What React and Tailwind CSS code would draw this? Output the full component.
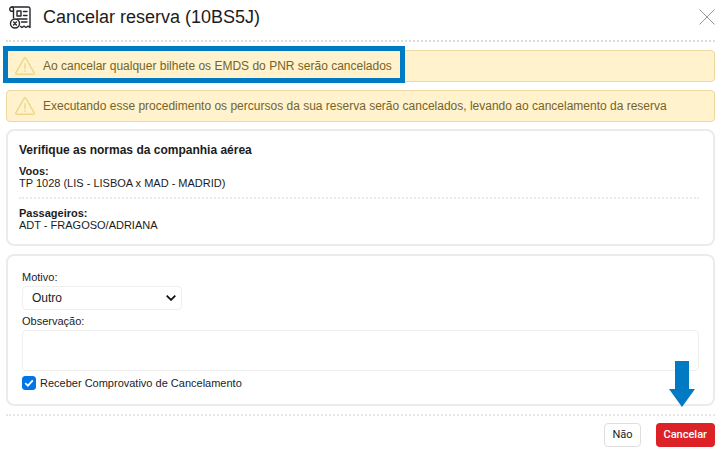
import { useState } from "react";

const alerts = [
  "Ao cancelar qualquer bilhete os EMDS do PNR serão cancelados",
  "Executando esse procedimento os percursos da sua reserva serão cancelados, levando ao cancelamento da reserva",
];

function ReceiptCancelIcon() {
  return (
    <svg viewBox="0 0 22 23" className="h-[23px] w-[22px] shrink-0" fill="none" stroke="#26262b" strokeWidth="1.4" strokeLinejoin="round" strokeLinecap="round" aria-hidden="true">
      <path d="M4.500 12V5.200H2.300C1.200 5.200.8 4.200.8 3.100S1.500 1 2.700 1H19.500C20.700 1 21 1.800 21 2.800V21.500L19 20.200L17 21.500L15 20.200L13 21.500L11.500 20.400" />
      <path d="M2.700 1C4 1 4.500 2 4.500 3.100V5.200" />
      <path d="M8 5H12V10H8ZM14.500 5.500H18M14.500 9.500H18M8 13H18M12.500 16H18" />
      <circle cx="6" cy="17.500" r="4.500" />
      <path d="M4.600 16.100L7.400 18.900M7.400 16.100L4.600 18.900" />
    </svg>
  );
}

function WarningIcon() {
  return (
    <svg viewBox="0 0 20 18" className="h-[18px] w-5 shrink-0" fill="none" stroke="#efd68c" strokeWidth="1.4" strokeLinejoin="round" strokeLinecap="round" aria-hidden="true">
      <path d="M9.300 1.200Q10 .4 10.700 1.200L19.200 15.900Q19.600 17.200 18.400 17.200H1.600Q.4 17.200.8 15.900Z" />
      <path d="M10 6.500V11.500M10 13.700V14.200" />
    </svg>
  );
}

function Alert({ children, highlighted }) {
  return (
    <div role="alert" className="relative flex min-h-8 items-center gap-2 rounded-sm border border-[#ecd9a0] bg-[#fff2cc] px-2 text-xs text-[#75642a]">
      <WarningIcon />
      <p>{children}</p>
      {highlighted && (
        <div className="pointer-events-none absolute -top-[5px] -left-1 h-[37px] w-[402px] border-[5px] border-[#007ac2]" />
      )}
    </div>
  );
}

export default function App() {
  const [reason, setReason] = useState("Outro");
  const [note, setNote] = useState("");
  const [receipt, setReceipt] = useState(true);

  return (
    <div className="bg-white pr-[5px] pl-[6px] font-['Liberation_Sans',Arial,sans-serif] text-[11px] leading-3 text-[#1c1c1c]">
      {/* Cabeçalho */}
      <header className="flex h-[42px] items-start justify-between border-b-2 border-dotted border-[#dcdcdc] pt-[5px]">
        <div className="flex items-center gap-3 pl-[3px]">
          <ReceiptCancelIcon />
          <h1 className="text-lg leading-6">Cancelar reserva (10BS5J)</h1>
        </div>
        <button type="button" aria-label="Fechar" className="pt-1">
          <svg viewBox="0 0 16 16" className="size-4" stroke="#999" strokeWidth="1" aria-hidden="true">
            <path d="M.5.5L15.500 15.500M15.500.5L.5 15.500" />
          </svg>
        </button>
      </header>

      <main>
        <div className="flex flex-col gap-2 pt-2 pb-[7px]">
          {alerts.map((text, i) => (
            <Alert key={text} highlighted={i === 0}>
              {text}
            </Alert>
          ))}
        </div>

        {/* Normas */}
        <section className="rounded-lg border-2 border-[#ebebeb] pt-[11px] pr-[14px] pb-[13px] pl-[11px]">
          <h2 className="text-xs leading-4 font-bold">Verifique as normas da companhia aérea</h2>
          <div className="border-b-2 border-dotted border-[#ebebeb] pt-[7px] pb-2">
            <h3 className="font-bold">Voos:</h3>
            <p>TP 1028 (LIS - LISBOA x MAD - MADRID)</p>
          </div>
          <div className="pt-2">
            <h3 className="font-bold">Passageiros:</h3>
            <p>ADT - FRAGOSO/ADRIANA</p>
          </div>
        </section>

        {/* Formulário */}
        <form id="cancel-form" onSubmit={(e) => e.preventDefault()} className="mt-2 rounded-lg border-2 border-[#ebebeb] px-[14px] pt-[15px] pb-[14px]">
          <label htmlFor="reason" className="block">Motivo:</label>
          <div className="relative mt-[3px] w-40">
            <select id="reason" value={reason} onChange={(e) => setReason(e.target.value)} className="h-6 w-full appearance-none rounded-sm border border-[#efefef] bg-white pl-[9px] text-xs leading-4">
              <option>Outro</option>
            </select>
            <svg viewBox="0 0 10 6" className="pointer-events-none absolute top-[9px] right-[6px] h-[6px] w-[10px]" fill="none" stroke="#111" strokeWidth="1.800" aria-hidden="true">
              <path d="M.7.7L5 4.900L9.300.7" />
            </svg>
          </div>
          <label htmlFor="note" className="mt-[5px] block">Observação:</label>
          <textarea id="note" value={note} onChange={(e) => setNote(e.target.value)} className="mt-[3px] block h-[41px] w-full resize-none rounded-sm border border-[#efefef] p-2" />
          <div className="mt-[5px] flex items-center gap-1">
            <div className="relative size-[14px]">
              <input id="receipt" type="checkbox" checked={receipt} onChange={(e) => setReceipt(e.target.checked)} className="peer block size-[14px] appearance-none rounded-[3px] border border-[#0075e8] checked:bg-[#0075e8]" />
              <svg viewBox="0 0 14 14" className="pointer-events-none absolute inset-0 hidden size-[14px] peer-checked:block" fill="none" stroke="white" strokeWidth="1.800" aria-hidden="true">
                <path d="M3.200 7.200L5.900 9.700L10.800 4.400" />
              </svg>
            </div>
            <label htmlFor="receipt">Receber Comprovativo de Cancelamento</label>
          </div>
        </form>
      </main>

      {/* Ações */}
      <footer className="relative mt-2 flex justify-end gap-[15px] border-t-2 border-dotted border-[#e6e6e6] pt-[7px] font-['Roboto',sans-serif]">
        <button type="button" className="h-6 rounded-sm border border-[#dedede] bg-white px-[7px]">Não</button>
        <button type="submit" form="cancel-form" className="h-6 rounded-sm bg-[#dc2127] px-2 font-medium text-white">Cancelar</button>
        <svg viewBox="0 0 26 46" className="pointer-events-none absolute -top-[55px] right-5 h-[46px] w-[26px]" fill="#007ac2" aria-hidden="true">
          <path d="M6 0H20V28H26L13 46L0 28H6Z" />
        </svg>
      </footer>
    </div>
  );
}
